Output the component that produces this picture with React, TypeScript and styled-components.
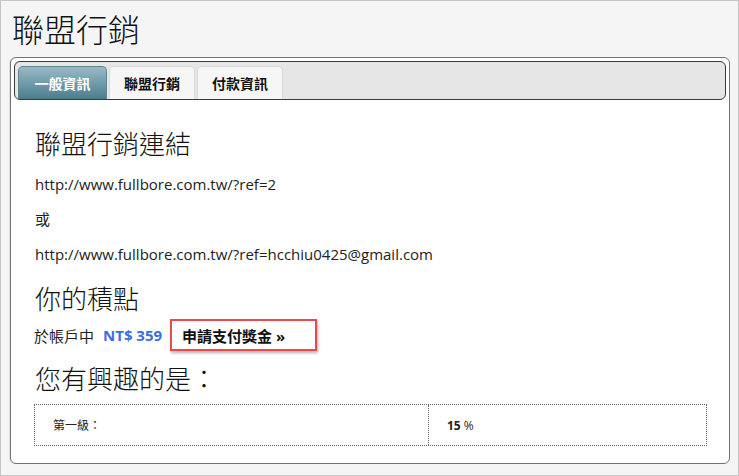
import React from "react";
import styled, { createGlobalStyle } from "styled-components";

const Global = createGlobalStyle`
  html, body { margin: 0; padding: 0; background: #f5f5f5; }
  * { box-sizing: border-box; }
`;

const CJK = `"Segoe UI", "Open Sans", "Noto Sans CJK TC", sans-serif`;

const Page = styled.div`
  width: 739px;
  height: 476px;
  border: 1px solid #c6c6c6;
  background: #f5f5f5;
  padding: 0 8px 0 9px;
  font-family: ${CJK};
  color: #222;
`;

const Title = styled.h1`
  margin: 0;
  padding: 9px 0 0 2px;
  height: 56px;
  font-size: 32px;
  font-weight: 300;
  line-height: 40px;
  color: #111;
`;

const Panel = styled.div`
  width: 720px;
  height: 407px;
  border: 1px solid #747474;
  border-radius: 6px;
  background: #fff;
  padding: 3px;
  box-shadow: -1px 0 0 #e0e0e0;
`;

const TabBar = styled.div`
  display: flex;
  gap: 2px;
  height: 39px;
  padding: 4px 3px 0;
  border: 1px solid #3a3a3a;
  border-radius: 6px;
  background: #e6e6e6;
`;

const Tab = styled.div<{ $active?: boolean }>`
  height: 33px;
  padding: 0 10px;
  display: flex;
  align-items: center;
  justify-content: center;
  font-size: 14px;
  font-weight: bold;
  border-radius: 5px 5px 0 0;
  border: 1px solid ${(p) => (p.$active ? "#5d8796" : "#d9d9d9")};
  border-bottom: none;
  color: ${(p) => (p.$active ? "#fff" : "#111")};
  background: ${(p) =>
    p.$active ? "linear-gradient(#96bbc8, #4b7c8c)" : "#f6f6f6"};
  width: ${(p) => (p.$active ? "89px" : "86px")};
`;

const Content = styled.div`
  padding: 27px 18px 0 21px;
`;

const Heading = styled.h2`
  margin: 0;
  font-size: 26px;
  font-weight: 300;
  line-height: 34px;
  color: #111;
`;

const Line = styled.p`
  margin: 0;
  font-size: 15px;
  line-height: 20px;
  color: #222;
`;

const LinkBlock = styled.div`
  display: flex;
  flex-direction: column;
  gap: 15px;
  padding: 13px 0 18px;
`;

const PointsRow = styled.div`
  display: flex;
  align-items: center;
  padding: 3px 0 11px;
  font-size: 15px;
  margin-left: -1px;
`;

const Amount = styled.b`
  color: #3a6fe0;
  margin-left: 9px;
  font-weight: bold;
`;

const PayButton = styled.span`
  margin-left: 8px;
  display: inline-flex;
  align-items: center;
  height: 32px;
  width: 147px;
  padding-left: 10px;
  border: 2px solid #e9484e;
  box-shadow: 1px 2px 3px rgba(0, 0, 0, 0.3);
  font-size: 15px;
  font-weight: bold;
  color: #111;
`;

const Table = styled.div`
  margin-top: 8px;
  margin-left: -1px;
  display: grid;
  grid-template-columns: 394px 1fr;
  width: 673px;
  height: 42px;
  border: 1px dotted #666;
`;

const Cell = styled.div<{ $first?: boolean }>`
  display: flex;
  align-items: center;
  padding-left: 18px;
  border-right: ${(p) => (p.$first ? "1px dotted #666" : "none")};
  font-size: 12px;
  color: #222;
`;

export default function App() {
  return (
    <>
      <Global />
      <Page>
        <Title>聯盟行銷</Title>
        <Panel>
          <TabBar>
            <Tab $active>一般資訊</Tab>
            <Tab>聯盟行銷</Tab>
            <Tab>付款資訊</Tab>
          </TabBar>
          <Content>
            <Heading>聯盟行銷連結</Heading>
            <LinkBlock>
              <Line>http://www.fullbore.com.tw/?ref=2</Line>
              <Line>或</Line>
              <Line>http://www.fullbore.com.tw/?ref=hcchiu0425@gmail.com</Line>
            </LinkBlock>
            <Heading>你的積點</Heading>
            <PointsRow>
              於帳戶中<Amount>NT$ 359</Amount>
              <PayButton>申請支付獎金 »</PayButton>
            </PointsRow>
            <Heading>您有興趣的是：</Heading>
            <Table>
              <Cell $first>第一級：</Cell>
              <Cell>
                <b>15</b>&nbsp;%
              </Cell>
            </Table>
          </Content>
        </Panel>
      </Page>
    </>
  );
}
